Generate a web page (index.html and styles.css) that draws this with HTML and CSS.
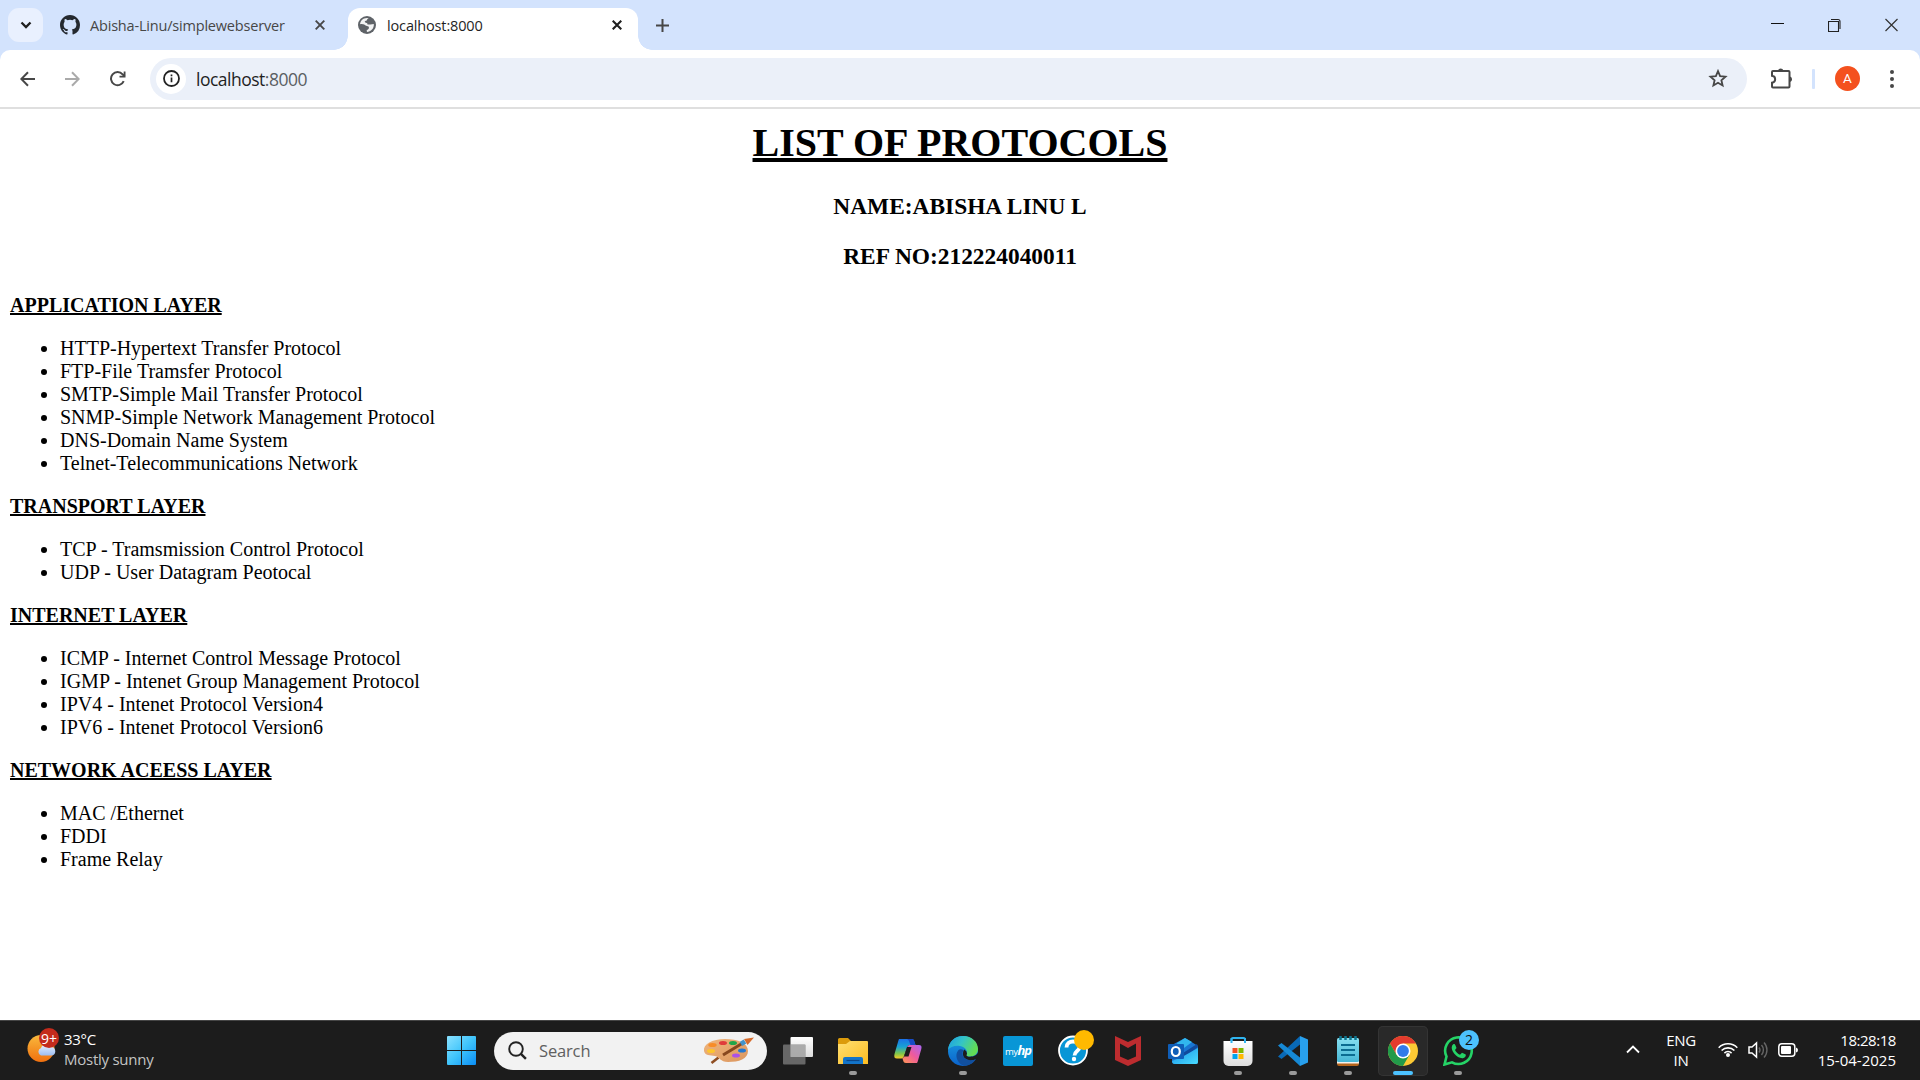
FILE: index.html
```html
<!DOCTYPE html>
<html lang="en">
<head>
<meta charset="utf-8">
<title>localhost:8000</title>
<link rel="stylesheet" href="styles.css">
</head>
<body>
<div class="screen">
  <header class="tabstrip">
    <div class="tab-search"><svg width="12" height="8" viewBox="0 0 12 8"><path d="M1.5 1.5 6 6l4.500-4.500" fill="none" stroke="#1f1f1f" stroke-width="2.300"/></svg></div>
    <div class="tab tab-idle">
      <svg width="20" height="20" viewBox="0 0 16 16"><path fill="#24292f" d="M8 0C3.580 0 0 3.580 0 8c0 3.540 2.290 6.530 5.470 7.590.4.070.55-.17.55-.38 0-.19-.01-.82-.01-1.490-2.010.37-2.530-.49-2.690-.94-.09-.23-.48-.94-.82-1.130-.28-.15-.68-.52-.01-.53.63-.01 1.080.58 1.230.82.72 1.210 1.870.87 2.330.66.070-.52.28-.87.51-1.070-1.780-.2-3.640-.89-3.640-3.950 0-.87.31-1.590.82-2.150-.08-.2-.36-1.020.08-2.120 0 0 .67-.21 2.200.82a7.600 7.600 0 0 1 4 0c1.530-1.040 2.200-.82 2.200-.82.44 1.100.16 1.920.08 2.120.51.56.82 1.270.82 2.150 0 3.070-1.870 3.750-3.650 3.950.29.25.54.73.54 1.480 0 1.070-.01 1.930-.01 2.200 0 .21.15.46.55.38A8 8 0 0 0 16 8c0-4.420-3.580-8-8-8z"/></svg>
      <span class="tab-title">Abisha-Linu/simplewebserver</span>
      <svg class="tab-close" width="10" height="10" viewBox="0 0 10 10"><path d="m.7.700 8.600 8.600m0-8.600L.7 9.300" stroke="#474747" stroke-width="1.900"/></svg>
    </div>
    <div class="tab tab-active">
      <svg width="18" height="18" viewBox="0 0 18 18"><circle cx="9" cy="9" r="9" fill="#5f6368"/><path d="M10.800 2.200c-2.300.5-1.200 2.300-3 2.600-1.600.3-1.200 1.700 0 2 1.500.4 2 .9 1.600 1.700h2.700c1 .2 2.200-.4 3.700-.4.5 4.300-3 7.900-6.900 7.900l-.5-1.900c2-.2 2.700-1.500 2.500-2.800-.2-1.300-1.800-1-2.700-1.500C6.600 9 5.200 7.600 2.100 8.300 2.300 4.600 5.400 1.300 10.800 2.200z" fill="#fff" opacity=".92"/><path d="M2.200 9c2.600-.3 4 1 5.300 1.500-.1 2.400 0 2.700 1 3.200v2.200C4.400 15.500 2.200 12.500 2.200 9zM11 2.500c.8 1 .2 2 1.500 2.300 1 .3.400 1.700 1.300 2.100.7.300 1.400.2 2 0-.7-2-2.400-3.800-4.800-4.400z" fill="#5f6368"/></svg>
      <span class="tab-title">localhost:8000</span>
      <svg class="tab-close" width="10" height="10" viewBox="0 0 10 10"><path d="m.7.700 8.600 8.600m0-8.600L.7 9.300" stroke="#1f1f1f" stroke-width="2.100"/></svg>
    </div>
    <svg class="new-tab" width="13" height="13" viewBox="0 0 13 13"><path d="M6.500 0v13M0 6.500h13" stroke="#474747" stroke-width="2"/></svg>
    <div class="window-controls">
      <svg width="13" height="14" viewBox="0 0 13 14"><path d="M0 5.500h13" stroke="#111"/></svg>
      <svg width="13" height="14" viewBox="0 0 13 14"><path d="M.5 3.500h10v10H.5zM3 1.500h7a2 2 0 0 1 2 2V11" fill="none" stroke="#222" stroke-width="1.100"/></svg>
      <svg width="13" height="14" viewBox="0 0 13 14"><path d="m.5 1 12 12m0-12-12 12" stroke="#333" stroke-width="1.200"/></svg>
    </div>
  </header>

  <nav class="toolbar">
    <div class="nav-buttons">
      <svg width="15" height="16" viewBox="0 0 15 16"><path d="M15 8H1.500M8 1.200 1.300 8 8 14.800" fill="none" stroke="#474747" stroke-width="2"/></svg>
      <svg width="15" height="16" viewBox="0 0 15 16"><path d="M0 8h13.500M7 1.200 13.700 8 7 14.800" fill="none" stroke="#aaa" stroke-width="2"/></svg>
      <svg width="16" height="16" viewBox="0 0 16 16"><path d="M13.700 10.200A6.600 6.600 0 1 1 12.600 3.300L14.600 5.300" fill="none" stroke="#474747" stroke-width="2"/><path d="M15.500.500v6H9.500V4.700h4.200V.5z" fill="#474747"/></svg>
    </div>
    <div class="omnibox">
      <div class="site-info"><svg width="17" height="17" viewBox="0 0 17 17"><circle cx="8.500" cy="8.500" r="7.500" fill="none" stroke="#222" stroke-width="1.800"/><path d="M8.500 7.600v4.700M8.500 4.500v1.800" stroke="#222" stroke-width="1.700"/></svg></div>
      <span class="url">localhost<span class="port">:8000</span></span>
      <svg class="star" width="20" height="19" viewBox="0 0 20 19"><path d="m10 2.100 2.100 5 5.400.5-4.100 3.600 1.200 5.300L10 13.700l-4.600 2.800 1.200-5.300-4.100-3.600 5.400-.5z" fill="none" stroke="#474747" stroke-width="1.800"/></svg>
    </div>
    <div class="toolbar-actions">
      <svg width="22" height="21" viewBox="0 0 22 21"><path d="M2 3h15.500a1 1 0 0 1 1 1v14.500a1 1 0 0 1-1 1H2a1 1 0 0 1-1-1V14.700c4.200-.5 4.200-6.400 0-6.900V4a1 1 0 0 1 1-1z" fill="none" stroke="#474747" stroke-width="2"/><path d="M7 2.500a2.800 2.800 0 0 1 5.400 0zM19 8.500a2.800 2.800 0 0 1 0 5.400z" fill="#474747"/></svg>
      <div class="divider"></div>
      <div class="avatar">A</div>
      <svg width="4" height="18" viewBox="0 0 4 18"><g fill="#474747"><circle cx="2" cy="2" r="2"/><circle cx="2" cy="9" r="2"/><circle cx="2" cy="16" r="2"/></g></svg>
    </div>
  </nav>

  <main class="page">
    <div class="intro">
      <h1><u>LIST OF PROTOCOLS</u></h1>
      <h3>NAME:ABISHA LINU L</h3>
      <h3>REF NO:212224040011</h3>
    </div>
    <b><u>APPLICATION LAYER</u></b>
    <ul>
      <li>HTTP-Hypertext Transfer Protocol</li>
      <li>FTP-File Tramsfer Protocol</li>
      <li>SMTP-Simple Mail Transfer Protocol</li>
      <li>SNMP-Simple Network Management Protocol</li>
      <li>DNS-Domain Name System</li>
      <li>Telnet-Telecommunications Network</li>
    </ul>
    <b><u>TRANSPORT LAYER</u></b>
    <ul>
      <li>TCP - Tramsmission Control Protocol</li>
      <li>UDP - User Datagram Peotocal</li>
    </ul>
    <b><u>INTERNET LAYER</u></b>
    <ul>
      <li>ICMP - Internet Control Message Protocol</li>
      <li>IGMP - Intenet Group Management Protocol</li>
      <li>IPV4 - Intenet Protocol Version4</li>
      <li>IPV6 - Intenet Protocol Version6</li>
    </ul>
    <b><u>NETWORK ACEESS LAYER</u></b>
    <ul>
      <li>MAC /Ethernet</li>
      <li>FDDI</li>
      <li>Frame Relay</li>
    </ul>
  </main>

  <footer class="taskbar">
    <svg width="0" height="0" class="defs">
      <defs>
        <linearGradient id="win" x1="0" y1="0" x2="1" y2="1"><stop offset="0" stop-color="#8be2ff"/><stop offset=".5" stop-color="#3fc4fb"/><stop offset="1" stop-color="#0a8df5"/></linearGradient>
        <linearGradient id="sun" x1="0" y1="0" x2="0" y2="1"><stop offset="0" stop-color="#f9b93c"/><stop offset="1" stop-color="#f0700f"/></linearGradient>
        <linearGradient id="cloud" x1="0" y1="0" x2="0" y2="1"><stop offset="0" stop-color="#e9f2ff"/><stop offset="1" stop-color="#9dbdf0"/></linearGradient>
        <linearGradient id="wood" x1="0" y1="0" x2="1" y2="1"><stop offset="0" stop-color="#efb57c"/><stop offset="1" stop-color="#dc975f"/></linearGradient>
        <linearGradient id="white" x1="0" y1="0" x2="0" y2="1"><stop offset="0" stop-color="#fff"/><stop offset="1" stop-color="#ddd"/></linearGradient>
        <linearGradient id="folder" x1="0" y1="0" x2="1" y2="1"><stop offset="0" stop-color="#ffdf72"/><stop offset="1" stop-color="#fdbd21"/></linearGradient>
        <linearGradient id="cop1" x1="0" y1="0" x2="0" y2="1"><stop offset="0" stop-color="#1b71e8"/><stop offset=".4" stop-color="#18a2d4"/><stop offset=".75" stop-color="#7fc64a"/><stop offset="1" stop-color="#f6c928"/></linearGradient>
        <linearGradient id="cop2" x1="1" y1="0" x2="0" y2="1"><stop offset="0" stop-color="#a866f4"/><stop offset=".5" stop-color="#ef5a9c"/><stop offset="1" stop-color="#ff9852"/></linearGradient>
        <linearGradient id="edge1" x1="0" y1="0" x2="1" y2=".4"><stop offset="0" stop-color="#1b9de2"/><stop offset=".5" stop-color="#34c4c7"/><stop offset="1" stop-color="#62dc55"/></linearGradient>
        <linearGradient id="edge2" x1="0" y1="0" x2="0" y2="1"><stop offset="0" stop-color="#1ba0e2"/><stop offset="1" stop-color="#0b62cb"/></linearGradient>
        <linearGradient id="note" x1="0" y1="0" x2="0" y2="1"><stop offset="0" stop-color="#86dff0"/><stop offset="1" stop-color="#47b7d6"/></linearGradient>
        <linearGradient id="mail" x1="0" y1="0" x2="1" y2="1"><stop offset="0" stop-color="#178fe4"/><stop offset="1" stop-color="#4adcff"/></linearGradient>
      </defs>
    </svg>
    <div class="weather">
      <svg width="33" height="36" viewBox="0 0 33 36"><circle cx="14" cy="21.500" r="13.500" fill="url(#sun)"/><path d="M14 28.500a4 4 0 0 1 0-7.500 5.500 5.500 0 0 1 10-1c3 0 4.300 2 4.300 4.500s-2 4-4 4z" fill="url(#cloud)"/><circle cx="22" cy="11" r="10" fill="#c42b1c"/><text x="22" y="16.500" class="badge-text">9+</text></svg>
      <div class="weather-text"><span>33°C</span><span class="muted">Mostly sunny</span></div>
    </div>

    <div class="apps">
      <svg class="start" width="29" height="29" viewBox="0 0 29 29"><path d="M1 0h13v14H0V1a1 1 0 0 1 1-1zM15 0h13a1 1 0 0 1 1 1v13H15zM0 15h14v14H1a1 1 0 0 1-1-1zM15 15h14v13a1 1 0 0 1-1 1H15z" fill="url(#win)"/></svg>
      <div class="search">
        <svg width="19" height="19" viewBox="0 0 19 19"><circle cx="8" cy="8" r="6.800" fill="none" stroke="#222" stroke-width="1.900"/><path d="m12.700 12.700 5.200 5.200" stroke="#222" stroke-width="2.400"/></svg>
        <span class="search-label">Search</span>
        <svg width="52" height="28" viewBox="0 0 52 28"><path d="m8.500 26 7-5.500" stroke="#8f4e22" stroke-width="2.600"/><path d="M1 14C0 7 9 2 22 2s23 4 23 12-9 11-20 11c-8 0-8-5-13-6C7 18 2 19 1 14z" fill="url(#wood)"/><g><ellipse cx="9.500" cy="8" rx="4.200" ry="2" fill="#f78c28"/><ellipse cx="20" cy="6" rx="4" ry="2" fill="#e03b3b"/><ellipse cx="30" cy="6" rx="4" ry="2" fill="#20a649"/><ellipse cx="8" cy="14" rx="4" ry="2" fill="#fdc52d"/><ellipse cx="39" cy="13.500" rx="4" ry="2" fill="#2478d0"/><ellipse cx="33" cy="18.500" rx="4" ry="2" fill="#ab50e8"/></g><path d="M20 18 39 6.500" stroke="#87471e" stroke-width="3"/><path d="m38 7 4-2.500" stroke="#4493c9" stroke-width="5"/><path d="m41 2 10-1.500-6.500 7.500z" fill="#d66b2b"/></svg>
      </div>
      <div class="app-row">
        <div class="app"><svg width="30" height="30" viewBox="0 0 30 30"><rect x="7.500" y="1" width="22.500" height="20" rx="1" fill="url(#white)"/><rect y="8.500" width="22.500" height="20" rx="1" fill="#777" opacity=".82"/><path d="M7.500 8.500h15V21h-15z" fill="#bbb" opacity=".65"/></svg></div>
        <div class="app running"><svg width="30" height="30" viewBox="0 0 30 30"><path d="M0 3.500A1.500 1.500 0 0 1 1.500 2H10l3 3v5H0z" fill="#dc9b0b"/><path d="M0 8h8l4-3h17a1 1 0 0 1 1 1v22H0z" fill="url(#folder)"/><path d="M5 28v-5a2 2 0 0 1 2-2h16a2 2 0 0 1 2 2v5z" fill="#1374c9"/><path d="M8.500 24.500h13" stroke="#0b4689" stroke-width="1.200"/></svg></div>
        <div class="app"><svg width="30" height="30" viewBox="0 0 30 30"><path d="M6 3h13c1.500 0 2 1 2.500 3l1 3h-5c-2 0-3 1-3.700 3L11 20c-.7 2-1.500 2.500-4 2.500H4C1.500 22.500.8 21 1.500 18L5 6c.5-1.500.5-2 1-3z" fill="url(#cop1)"/><path d="M14 3h5c1.500 0 2 1 2.500 3l1 3h-5l-1.500-4q-.5-1.500-2-2z" fill="#194ac5"/><path d="M24 27H13c-2 0-2.500-1-3-3l-.7-2c1 0 2-1 2.500-3l2.500-8c.5-1.500 1.500-2 3.500-2h8c2.500 0 3.200 1.500 2.500 4l-3 10.500c-.4 1.500-.7 2.500-1.300 3.500z" fill="url(#cop2)"/><path d="m14 11-3 9.500h4.500l3-9.500z" fill="#1c1c1c"/></svg></div>
        <div class="app running"><svg width="30" height="30" viewBox="0 0 30 30"><circle cx="15" cy="15" r="15" fill="url(#edge2)"/><path d="M0 14C1 5 7 0 15 0c9 0 15 6 15 13 0 5-4 7.500-8 7.500-4 0-4.500-1-3.500-2.200C20 15 17.500 11 12 10 7 9 2 11 0 14z" fill="url(#edge1)"/><path d="M10.500 14c-5 6 0 14.500 6 15.900 5-.2 9.500-3.400 11.500-6.900-4 2-9 1.500-11.500-1-2.500-2.300-2.600-5-1-8-2-1-4-.8-5 0z" fill="#114f9e"/><path d="M19 18c-1 1.500-.3 2.700 3 2.700 4 0 7-1.700 7.700-4.200l.8 4.500-2.300 2c-5 2.200-9.500 1-11.500-1-2.200-2.200-2.400-5.500-.5-8.500q3 1.500 2.800 4.500z" fill="#1c1c1c"/></svg></div>
        <div class="app"><div class="myhp">my<b>hp</b></div></div>
        <div class="app"><svg width="36" height="36" viewBox="0 0 36 36"><circle cx="15" cy="20.500" r="14" fill="#0896d6" stroke="#fff" stroke-width="1.800"/><path d="M8.500 17.500c0-4 3-6 6.500-6s6.500 2 6.500 5.500c0 4-5 4-5 8.500" fill="none" stroke="#fff" stroke-width="3.800"/><circle cx="16" cy="29" r="2.200" fill="#fff"/><circle cx="26" cy="10" r="10" fill="#ffb900"/></svg></div>
        <div class="app"><svg width="30" height="30" viewBox="0 0 30 30"><path d="m2 0 13 6 13-6v24l-13 6-13-6zm5 7.500v13l8 3.500 8-3.500v-13L15 12z" fill="#bd2c2f" fill-rule="evenodd"/></svg></div>
        <div class="app"><svg width="30" height="30" viewBox="0 0 30 30"><path d="M4 9 17 2l13 8v16a2 2 0 0 1-2 2H7a3 3 0 0 1-3-3z" fill="#1976d2"/><path d="m9 7 8-5 7 4-12 9z" fill="#31b7ee"/><path d="M15 17 29 8l1 3-15 11z" fill="#104a9c"/><path d="m14 21 16-9v14a2 2 0 0 1-2 2H7a3 3 0 0 1-3-3z" fill="url(#mail)"/><rect y="8" width="16" height="15" rx="1" fill="#0f5eb8"/><ellipse cx="7.800" cy="15.500" rx="4" ry="4.500" fill="none" stroke="#fff" stroke-width="2.200"/></svg></div>
        <div class="app running"><svg width="30" height="30" viewBox="0 0 30 30"><path d="M8.500 7V3.500A1.500 1.500 0 0 1 10 2h10.500A1.500 1.500 0 0 1 22 3.500V7" fill="none" stroke="#30b4ef" stroke-width="2"/><path d="M.5 5h29v20a5 5 0 0 1-5 5h-19a5 5 0 0 1-5-5z" fill="url(#white)"/><path d="M8.500 2v5M22 2v5" stroke="#30b4ef" stroke-width="2"/><path d="M9.500 12h5v5h-5z" fill="#f25022"/><path d="M15.500 12h5v5h-5z" fill="#7fba00"/><path d="M9.500 18h5v5h-5z" fill="#00a4ef"/><path d="M15.500 18h5v5h-5z" fill="#ffb900"/></svg></div>
        <div class="app running"><svg width="30" height="30" viewBox="0 0 30 30"><path d="m22 0 8 3.500v23L22 30z" fill="#28a0ee"/><path d="M0 20.500 22 0v8.500L3.500 23z" fill="#0969b6"/><path d="M3.500 7 22 21.500V30L0 9.500z" fill="#1689d5"/></svg></div>
        <div class="app running"><svg width="30" height="30" viewBox="0 0 30 30"><path d="M4 25h22v3a2 2 0 0 1-2 2H6a2 2 0 0 1-2-2z" fill="#b5651d"/><path d="M4 25h22v2.500H4z" fill="#f4f1ec"/><rect x="4" y="2" width="22" height="24" rx="1.500" fill="url(#note)"/><path d="M8 9h14M8 14h14M8 19h14" stroke="#0b6c91" stroke-width="1.800"/><path d="M7.500 0v4M12.500 0v4M17.500 0v4M22.500 0v4" stroke="#0c7590" stroke-width="2.500"/></svg></div>
        <div class="app running active"><svg width="30" height="30" viewBox="0 0 30 30"><circle cx="15" cy="15" r="15" fill="#fcc934"/><path d="M15 15 8.500 18.750 2 7.500a15 15 0 0 1 26 0H15z" fill="#e33b2e"/><path d="M2 7.500A15 15 0 0 0 15 30l6.500-11.250L15 15l-6.500 3.750z" fill="#229a4a"/><circle cx="15" cy="15" r="7.500" fill="#fff"/><circle cx="15" cy="15" r="5.900" fill="#327bea"/></svg></div>
        <div class="app running"><svg width="36" height="36" viewBox="0 0 36 36"><path d="m1.500 34.500 2-8A13.300 13.300 0 1 1 9 32.300z" fill="none" stroke="#25d366" stroke-width="2.600"/><path d="M9 16c1.500-3 3-2 3.500-.5l1 2.500-1.500 2c1 2.200 2.800 3.800 5 4.700l2-2 3.300 1.600c1.200.7.200 3.200-1.800 3.700C15 29.500 7 21 9 16z" fill="#25d366"/><circle cx="26" cy="10" r="10" fill="#4cc2ff"/><text x="26" y="15" class="badge-text dark">2</text></svg></div>
      </div>
    </div>

    <div class="tray">
      <svg width="14" height="9" viewBox="0 0 14 9"><path d="m1 7.500 6-6 6 6" fill="none" stroke="#fff" stroke-width="1.800"/></svg>
      <div class="language"><span>ENG</span><span>IN</span></div>
      <svg class="wifi" width="20" height="15" viewBox="0 0 20 15"><g fill="none" stroke="#fff" stroke-width="1.600"><path d="M.7 5.700a13 13 0 0 1 18.600 0M3.600 8.500a9 9 0 0 1 12.800 0M6.400 11.100a5.200 5.200 0 0 1 7.200 0"/></g><circle cx="10" cy="13" r="2" fill="#fff"/></svg>
      <svg class="volume" width="21" height="18" viewBox="0 0 21 18"><path d="M1 6h3l4.500-4v14L4 12H1z" fill="none" stroke="#fff" stroke-width="1.500"/><g fill="none" stroke="#666" stroke-width="1.400"><path d="M11 6.500a4 4 0 0 1 0 5M13.500 4a7.500 7.500 0 0 1 0 10M16 1.500a11 11 0 0 1 0 15"/></g></svg>
      <svg class="battery" width="20" height="14" viewBox="0 0 20 14"><rect x=".8" y=".8" width="16" height="12.400" rx="3" fill="none" stroke="#fff" stroke-width="1.500"/><rect x="3" y="3" width="10" height="8" rx="1" fill="#fff"/><path d="M18 4.500q2 .5 2 2.500t-2 2.500z" fill="#fff"/></svg>
      <div class="clock"><span class="time">18:28:18</span><span class="date">15-04-2025</span></div>
    </div>
  </footer>
</div>
</body>
</html>
```
FILE: styles.css
```css
* { box-sizing: border-box; }
body { margin: 0; }
svg { display: block; flex: none; }

.screen {
  display: flex;
  flex-direction: column;
  width: 1920px;
  height: 1080px;
  overflow: hidden;
  background: #d3e3fd;
  font-family: "Open Sans", "Noto Sans", sans-serif;
  white-space: nowrap;
}

/* Tab strip */
.tabstrip {
  display: flex;
  height: 50px;
  padding: 8px 22px 0 8px;
}
.tab-search {
  display: flex;
  align-items: center;
  justify-content: center;
  width: 35px;
  height: 34px;
  border-radius: 11px;
  background: #e9f0fe;
}
.tab {
  display: flex;
  align-items: center;
  height: 42px;
  padding-bottom: 8px;
  font-size: 14.5px;
}
.tab-idle {
  width: 305px;
  padding-left: 17px;
  padding-right: 23px;
  gap: 10px;
  color: #474747;
}
.tab-idle .tab-title { letter-spacing: -0.19px; }
.tab-active {
  position: relative;
  width: 290px;
  padding-left: 10px;
  padding-right: 16px;
  gap: 11px;
  border-radius: 12px 12px 0 0;
  background: #fff;
  color: #1f1f1f;
}
.tab-active .tab-title { letter-spacing: -0.15px; }
.tab-active::before,
.tab-active::after {
  content: "";
  position: absolute;
  bottom: 0;
  width: 14px;
  height: 14px;
}
.tab-active::before { left: -14px; background: radial-gradient(circle at 0 0, transparent 13.5px, #fff 14px); }
.tab-active::after { right: -14px; background: radial-gradient(circle at 100% 0, transparent 13.5px, #fff 14px); }
.tab-close { margin-left: auto; }
.new-tab { margin: 11px 0 0 18px; }
.window-controls {
  display: flex;
  gap: 44px;
  margin: 10px 0 0 auto;
}

/* Toolbar */
.toolbar {
  display: flex;
  align-items: center;
  height: 59px;
  padding: 0 26px 0 20px;
  border-bottom: 2px solid #dfdfdf;
  border-radius: 10px 10px 0 0;
  background: #fff;
}
.nav-buttons { display: flex; gap: 30px; width: 130px; }
.omnibox {
  display: flex;
  align-items: center;
  width: 1597px;
  height: 42px;
  padding: 0 19px 0 6px;
  border-radius: 21px;
  background: #ebf0f9;
}
.site-info {
  display: flex;
  align-items: center;
  justify-content: center;
  width: 30px;
  height: 30px;
  border-radius: 50%;
  background: #fff;
}
.url { margin-left: 10px; font-size: 17.500px; letter-spacing: -0.500px; color: #1f1f1f; }
.port { color: #5a5e63; }
.star { margin-left: auto; }
.toolbar-actions {
  display: flex;
  align-items: center;
  margin-left: auto;
}
.divider { width: 3px; height: 20px; margin: 0 20px 0 19px; border-radius: 1px; background: #d3e3fd; }
.avatar {
  width: 25px;
  height: 25px;
  margin-right: 30px;
  border-radius: 50%;
  background: #f4511e;
  color: #fff;
  font: 13.5px/25px Roboto, sans-serif;
  text-align: center;
}

/* Document */
.page {
  flex: 1;
  padding: 11px 10px 10px;
  background: #fff;
  color: #000;
  font: 20px/23px "Liberation Serif", serif;
}
.intro { text-align: center; }
h1 { margin: 0 0 27px; font-size: 40px; line-height: 46px; }
h1 u { text-decoration-thickness: 4px; }
h3 { margin: 23.400px 0; font-size: 23.400px; line-height: 27px; }
ul { margin: 20px 0; padding-left: 50px; }

/* Taskbar */
.taskbar {
  display: flex;
  height: 60px;
  border-top: 1px solid #454545;
  background: #1c1c1c;
  color: #fff;
  font-size: 15px;
  line-height: 20px;
}
.defs { position: absolute; }
.weather { display: flex; gap: 4px; width: 447px; padding: 6px 0 0 27px; }
.weather-text { display: flex; flex-direction: column; padding-top: 2px; }
.weather-text span { letter-spacing: -0.3px; }
.weather-text .muted { color: #c4c4c4; letter-spacing: -0.25px; }
.badge-text { fill: #fff; font-size: 14px; text-anchor: middle; }
.badge-text.dark { fill: #111; }

.apps { display: flex; align-items: center; }
.start { margin-right: 18px; }
.search {
  display: flex;
  align-items: center;
  width: 273px;
  height: 38px;
  padding: 0 12px 0 14px;
  border-radius: 19px;
  background: #f2f2f2;
}
.search-label { flex: 1; margin-left: 12px; font-size: 16.500px; letter-spacing: -0.15px; color: #606060; }
.app-row { display: flex; gap: 5px; margin-left: 6px; }
.app {
  position: relative;
  display: flex;
  align-items: flex-end;
  justify-content: flex-start;
  width: 50px;
  height: 50px;
  padding: 0 0 10px 10px;
  border-radius: 5px;
}
.app.active { background: #292929; box-shadow: inset 0 0 0 1px #343434; }
.app.running::after {
  content: "";
  position: absolute;
  left: 21px;
  bottom: 1px;
  width: 8px;
  height: 4px;
  border-radius: 2px;
  background: #9a9a9a;
}
.app.active::after { left: 15px; width: 20px; background: #4cc2ff; }
.myhp {
  width: 30px;
  height: 30px;
  border-radius: 2px;
  background: #0896d6;
  font-size: 9.500px;
  line-height: 29px;
  letter-spacing: -0.5px;
  text-align: center;
}
.myhp b { font-size: 13px; font-style: italic; letter-spacing: -1px; }

.tray { display: flex; align-items: center; margin-left: auto; padding: 0 24px 2px 0; }
.language { display: flex; flex-direction: column; width: 28px; margin: 0 23px 0 27px; align-items: center; letter-spacing: -0.3px; }
.volume { margin-left: 10px; }
.battery { margin-left: 9px; }
.clock { display: flex; flex-direction: column; align-items: flex-end; width: 98px; }
.time { letter-spacing: -0.45px; }
.date { letter-spacing: 0; }
```
